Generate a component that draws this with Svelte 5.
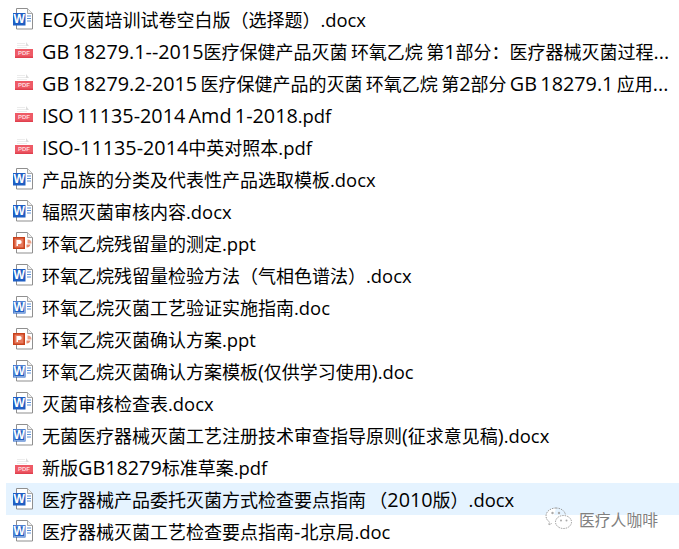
<script>
  const files = [
    ['w', 'EO灭菌培训试卷空白版（选择题）.docx'],
    ['p', 'GB 18279.1--2015医疗保健产品灭菌 环氧乙烷 第1部分：医疗器械灭菌过程...'],
    ['p', 'GB 18279.2-2015 医疗保健产品的灭菌 环氧乙烷 第2部分 GB 18279.1 应用...'],
    ['p', 'ISO 11135-2014 Amd 1-2018.pdf'],
    ['p', 'ISO-11135-2014中英对照本.pdf'],
    ['w', '产品族的分类及代表性产品选取模板.docx'],
    ['w', '辐照灭菌审核内容.docx'],
    ['s', '环氧乙烷残留量的测定.ppt'],
    ['w', '环氧乙烷残留量检验方法（气相色谱法）.docx'],
    ['d', '环氧乙烷灭菌工艺验证实施指南.doc'],
    ['s', '环氧乙烷灭菌确认方案.ppt'],
    ['d', '环氧乙烷灭菌确认方案模板(仅供学习使用).doc'],
    ['w', '灭菌审核检查表.docx'],
    ['d', '无菌医疗器械灭菌工艺注册技术审查指导原则(征求意见稿).docx'],
    ['p', '新版GB18279标准草案.pdf'],
    ['w', '医疗器械产品委托灭菌方式检查要点指南 （2010版）.docx'],
    ['d', '医疗器械灭菌工艺检查要点指南-北京局.doc']
  ];
  const parts = (s) => {
    const m = s.match(/^(.*?)(\.[a-z]+)?$/);
    const body = m[1].split(/([\u0000-\u024F]+)/).filter(Boolean);
    const out = body.map((t) => ({ t, c: /^[\u0000-\u024F]/.test(t) ? 'latin' : '' }));
    if (m[2]) out.push({ t: m[2], c: 'ext' });
    return out;
  };
</script>

<main class="page">
  <ul class="list">
    {#each files as [kind, name], i}
      <li class="row" class:selected={i === 15}>
        <span class="icon">
          {#if kind === 'p'}
            <svg width="20" height="20" viewBox="0 0 20 20">
              <path d="M4 2.500h8M4 4.500h10M4 6.500h10" stroke="#ececec" fill="none"/>
              <path d="M13 1l3 4h-3z" fill="#dcdcdc"/>
              <rect x="2" y="8" width="18" height="9" fill="#ee5a66"/>
              <rect x="2" y="15.500" width="18" height="1.500" fill="#e0404e"/>
              <text x="11" y="14.300" class="pdf">PDF</text>
            </svg>
          {:else}
            <svg width="20" height="22" viewBox="0 0 20 22">
              <path d="M3.500 .5h11l5 5v15.500h-16z" fill="#fff" stroke="#8f8f8f"/>
              <path d="M14.500 .5v5h5" fill="#f0f0f0" stroke="#a8a8a8"/>
              {#if kind === 's'}
                <path d="M14.500 7.500a4 4 0 0 1 4 4h-4z" fill="#eb9f86"/>
                <path d="M13.500 8.500v4h4a4 4 0 0 1-4 3z" fill="#e88a6e"/>
                <rect x="0" y="5" width="12" height="12" fill="#c8421c"/>
                <rect x="1.500" y="6.500" width="9" height="9" fill="#e8795c"/>
                <path d="M3.500 8h3.200a2 2 0 0 1 0 4H5v2H3.500z" fill="#fff"/>
              {:else}
                <path d="M14 8h4M14 10.500h4M14 13h4" stroke="#5b8fd6" fill="none"/>
                <rect x="0" y="5" width="12.500" height="12.500" fill="#1f5fc4"/>
                {#if kind === 'd'}
                  <rect x="1" y="6" width="10.500" height="10.500" fill="none" stroke="#fff" stroke-opacity="0.45"/>
                {/if}
                <text x="6.200" y="15.300" class="w">W</text>
              {/if}
            </svg>
          {/if}
        </span>
        <span class="name">
          {#each parts(name) as p}<span class={p.c}>{p.t}</span>{/each}
        </span>
      </li>
    {/each}
  </ul>

  <div class="mark">
    <svg width="28" height="24" viewBox="0 0 28 24">
      <path d="M11 1C5.500 1 1 4.500 1 9c0 2.500 1.300 4.500 3.500 6l-.8 3 3.300-1.700" fill="#fff" stroke="#999" stroke-dasharray="1.500 1"/>
      <path d="M11 1c5 0 9 3 9.500 7" fill="none" stroke="#999" stroke-dasharray="1.500 1"/>
      <ellipse cx="18.500" cy="15" rx="8" ry="6.500" fill="#fff" stroke="#999" stroke-dasharray="1.500 1"/>
      <circle cx="7.500" cy="6" r="1.200" fill="#aaa"/>
      <circle cx="14" cy="6" r="1.200" fill="#aaa"/>
      <circle cx="16" cy="13.500" r="1" fill="#aaa"/>
      <circle cx="21.500" cy="13.500" r="1" fill="#aaa"/>
    </svg>
    <span>医疗人咖啡</span>
  </div>
</main>

<style>
  :global(body) {
    margin: 0;
    background: #fff;
  }
  .page {
    position: relative;
    width: 679px;
    height: 549px;
    overflow: hidden;
    font-family: "Noto Sans CJK SC", sans-serif;
  }
  .list {
    list-style: none;
    margin: 0;
    padding: 3px 0 0 6px;
  }
  .row {
    display: flex;
    align-items: center;
    height: 32px;
    padding-left: 7px;
    gap: 9px;
    font-size: 18px;
    color: #000;
    white-space: nowrap;
  }
  .selected {
    background: #e5f3ff;
  }
  .icon {
    display: flex;
    width: 20px;
    justify-content: center;
    flex: none;
  }
  .name {
    line-height: 32px;
  }
  .latin {
    font-family: "Open Sans", sans-serif;
    font-size: 19.800px;
    word-spacing: -1.800px;
  }
  .ext {
    font-family: "Open Sans", sans-serif;
    font-size: 18.400px;
  }
  .pdf {
    font: bold 6px "Liberation Sans", sans-serif;
    fill: #ffd9dc;
    text-anchor: middle;
  }
  .w {
    font: bold 12px "Liberation Sans", sans-serif;
    fill: #fff;
    text-anchor: middle;
  }
  .mark {
    position: absolute;
    left: 545px;
    top: 507px;
    display: flex;
    align-items: center;
    gap: 6px;
    font-size: 15.800px;
    color: #808080;
    text-shadow: 0 0 1px #fff;
  }
</style>
